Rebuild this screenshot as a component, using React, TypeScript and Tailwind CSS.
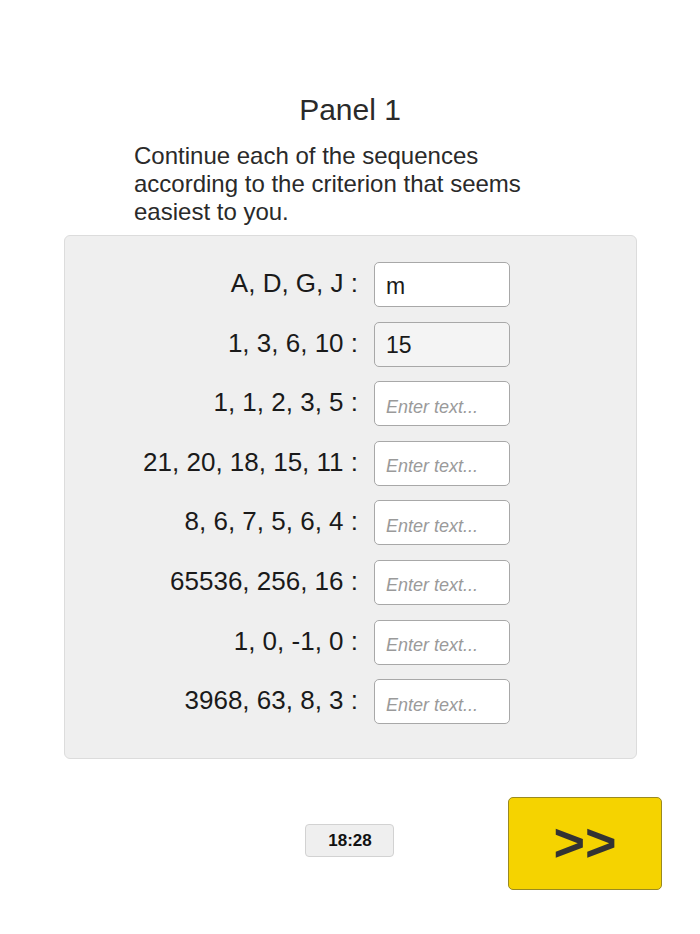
import React from "react";

const rows: { label: string; value?: string; muted?: boolean }[] = [
  { label: "A, D, G, J :", value: "m" },
  { label: "1, 3, 6, 10 :", value: "15", muted: true },
  { label: "1, 1, 2, 3, 5 :" },
  { label: "21, 20, 18, 15, 11 :" },
  { label: "8, 6, 7, 5, 6, 4 :" },
  { label: "65536, 256, 16 :" },
  { label: "1, 0, -1, 0 :" },
  { label: "3968, 63, 8, 3 :" },
];

export default function App() {
  return (
    <div
      className="w-[700px] h-[934px] bg-white text-[#1e1e1e] overflow-hidden"
      style={{ fontFamily: '"Liberation Sans", Arial, sans-serif' }}
    >
      <div className="pt-[92px]">
        <h1 className="text-center text-[30px] leading-[36px] text-[#2a2a2a] font-normal">
          Panel 1
        </h1>
        <p className="mt-[14px] mx-auto w-[432px] text-[24px] leading-[28px] text-[#2a2a2a]">
          Continue each of the sequences according to the criterion that seems easiest to you.
        </p>
        <div className="mt-[9px] ml-[64px] w-[573px] bg-[#efefef] border border-[#dcdcdc] rounded-[6px] pt-[26px] pb-[34px] flex flex-col gap-[14.6px]">
          {rows.map((r, i) => (
            <div key={i} className="flex items-center gap-4">
              <div className="w-[293px] text-right text-[26px] leading-[30px] text-[#1a1a1a] pb-[3px]">
                {r.label}
              </div>
              <input
                readOnly
                value={r.value ?? ""}
                placeholder="Enter text..."
                className={`w-[136px] h-[45px] rounded-[5px] border border-[#a8a8a8] pl-[11px] pr-[8px] pt-[3px] text-[23px] text-[#1a1a1a] outline-none placeholder:italic placeholder:text-[18px] placeholder:text-[#9a9a9a] ${
                  r.muted ? "bg-[#f4f4f4]" : "bg-white"
                }`}
                style={{ fontFamily: '"Liberation Sans", Arial, sans-serif' }}
              />
            </div>
          ))}
        </div>
        <div className="grid grid-cols-3 mt-[38px]">
          <div />
          <div className="flex justify-center pt-[27px]">
            <div className="w-[89px] h-[33px] flex items-center justify-center bg-[#efefef] border border-[#d2d2d2] rounded-[4px] text-[17px] font-bold text-[#111]">
              18:28
            </div>
          </div>
          <div className="flex justify-end pr-[38px]">
            <button className="w-[154px] h-[93px] bg-[#f5d300] border border-[#9a8a20] rounded-[5px] flex items-center justify-center text-[54px] font-bold text-[#333] leading-none pb-[4px]">
              &gt;&gt;
            </button>
          </div>
        </div>
      </div>
    </div>
  );
}
